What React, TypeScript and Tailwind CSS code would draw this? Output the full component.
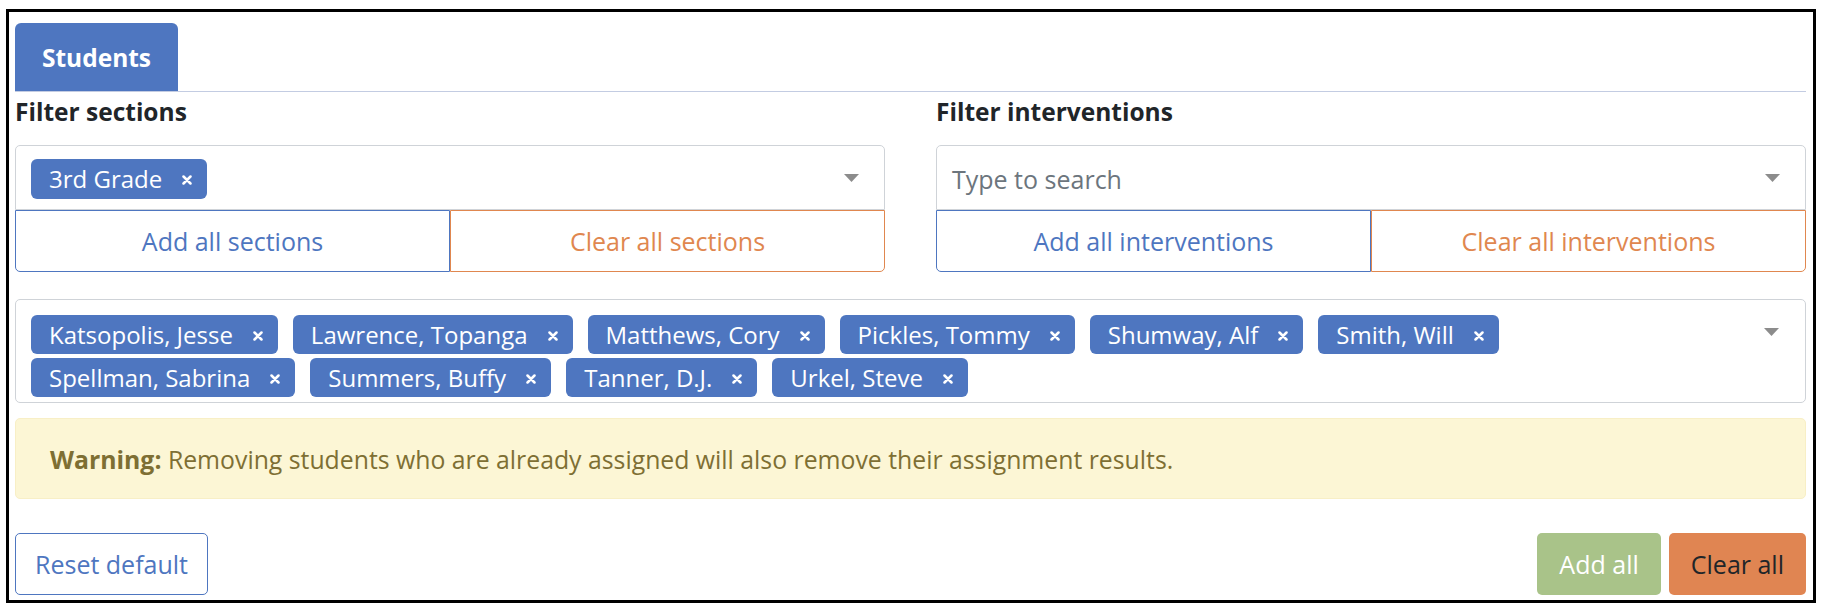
const sectionChips = ["3rd Grade"];

const studentChips = [
  "Katsopolis, Jesse",
  "Lawrence, Topanga",
  "Matthews, Cory",
  "Pickles, Tommy",
  "Shumway, Alf",
  "Smith, Will",
  "Spellman, Sabrina",
  "Summers, Buffy",
  "Tanner, D.J.",
  "Urkel, Steve",
];

function RemoveIcon() {
  return (
    <svg width="10" height="10" viewBox="0 0 10 10" className="shrink-0">
      <path d="M1.5 1.5 L8.5 8.5 M8.5 1.5 L1.5 8.5" stroke="white" strokeWidth="2.5" strokeLinecap="round" />
    </svg>
  );
}

function Caret() {
  return (
    <svg width="15" height="8" viewBox="0 0 15 8" className="shrink-0">
      <path d="M0 0 L15 0 L7.5 8 Z" fill="#8c8c8c" />
    </svg>
  );
}

function Chip({ label, tall }: { label: string; tall?: boolean }) {
  return (
    <div
      className={`flex items-center rounded-[6px] bg-[#4e76c0] pl-[18px] pr-[15px] text-[24px] text-white ${
        tall ? "h-[40px]" : "h-[39px]"
      }`}
    >
      <span className="leading-none">{label}</span>
      <span className="ml-[20px] flex items-center pt-[2px]">
        <RemoveIcon />
      </span>
    </div>
  );
}

function FilterColumn({
  title,
  chips,
  placeholder,
  addLabel,
  clearLabel,
}: {
  title: string;
  chips: string[];
  placeholder?: string;
  addLabel: string;
  clearLabel: string;
}) {
  return (
    <div className="flex flex-col">
      <h3 className="mt-[2px] mb-[15px] h-[36px] text-[24.5px] font-bold leading-[36px] text-[#212529]">{title}</h3>
      <div className="flex h-[65px] items-center rounded-t-[5px] border border-[#cfd3d8] pl-[15px] pr-[25px]">
        <div className="flex flex-1 items-center gap-[15px] pt-[3px]">
          {chips.map((c) => (
            <Chip key={c} label={c} tall />
          ))}
          {placeholder && <span className="pt-[2px] text-[#6c757d]">{placeholder}</span>}
        </div>
        <Caret />
      </div>
      <div className="grid h-[62px] grid-cols-2">
        <button className="rounded-bl-[5px] border-[1.5px] border-[#4e76c0] pt-[2px] text-[#4e76c0]">{addLabel}</button>
        <button className="rounded-br-[5px] border-[1.5px] border-[#e0874f] pt-[2px] text-[#e0874f]">{clearLabel}</button>
      </div>
    </div>
  );
}

export default function App() {
  return (
    <div
      className="bg-white pt-[9px] pl-[6px] text-[25px] text-[#212529]"
      style={{ fontFamily: '"Open Sans", sans-serif' }}
    >
      <div className="flex h-[594px] w-[1810px] flex-col border-[3px] border-black pt-[11px] pl-[6px] pr-[7px]">
        <div className="flex h-[69px] border-b border-[#c3cce2]">
          <div className="flex h-[68px] w-[163px] items-center justify-center rounded-t-[6px] bg-[#4e76c0] pt-[3px] text-[24.5px] font-bold text-white">
            Students
          </div>
        </div>

        <div className="grid grid-cols-2 gap-x-[51px]">
          <FilterColumn
            title="Filter sections"
            chips={sectionChips}
            addLabel="Add all sections"
            clearLabel="Clear all sections"
          />
          <FilterColumn
            title="Filter interventions"
            chips={[]}
            placeholder="Type to search"
            addLabel="Add all interventions"
            clearLabel="Clear all interventions"
          />
        </div>

        <div className="mt-[27px] flex h-[104px] items-start rounded-[5px] border border-[#cfd3d8] pt-[15px] pb-[5px] pl-[15px] pr-[26px]">
          <div className="flex flex-1 flex-wrap gap-x-[15px] gap-y-[4px]">
            {studentChips.map((c) => (
              <Chip key={c} label={c} />
            ))}
          </div>
          <div className="pt-[13px]">
            <Caret />
          </div>
        </div>

        <div className="mt-[15px] flex h-[81px] items-center rounded-[5px] border border-[#f8efc6] bg-[#fcf6d5] pl-[34px] pt-[2px] text-[24.8px] text-[#7e6f33]">
          <span>
            <span className="font-bold">Warning:</span> Removing students who are already assigned will also remove
            their assignment results.
          </span>
        </div>

        <div className="mt-[34px] flex items-start justify-between">
          <button className="h-[62px] rounded-[5px] border-[1.5px] border-[#4e76c0] px-[19px] pt-[2px] text-[#4e76c0]">
            Reset default
          </button>
          <div className="flex gap-[8px]">
            <button className="h-[62px] rounded-[5px] bg-[#a9c389] px-[22px] pt-[2px] text-white">Add all</button>
            <button className="h-[62px] rounded-[5px] bg-[#e08552] px-[22px] pt-[2px] text-[#212529]">Clear all</button>
          </div>
        </div>
      </div>
    </div>
  );
}
